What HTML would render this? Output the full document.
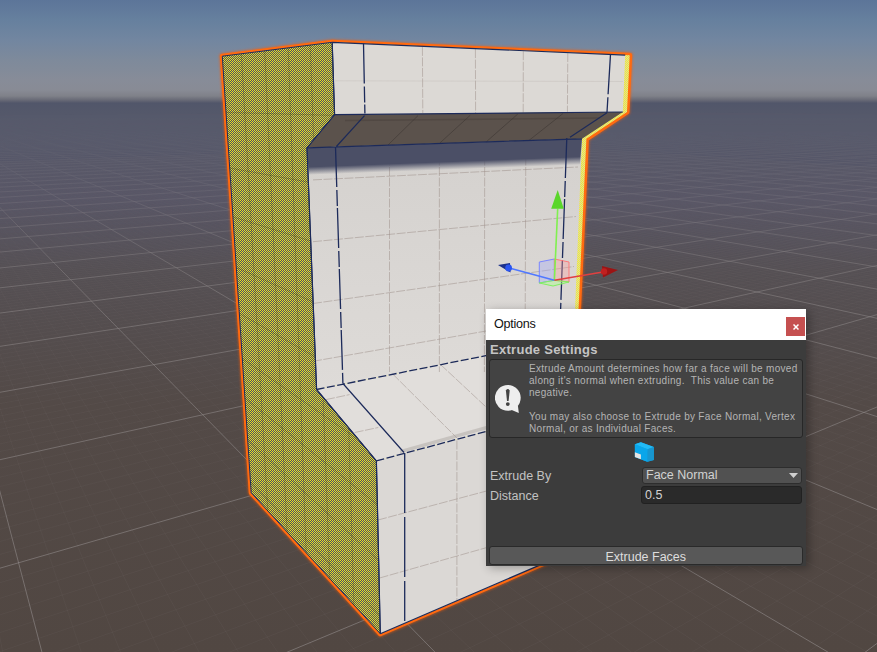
<!DOCTYPE html>
<html><head><meta charset="utf-8">
<style>
html,body{margin:0;padding:0;width:877px;height:652px;overflow:hidden;background:#514a4b;}
body{position:relative;font-family:"Liberation Sans",sans-serif;}
svg.scene{position:absolute;left:0;top:0;}
.dlg{position:absolute;left:486px;top:309px;width:320px;height:257px;background:#3c3c3c;box-shadow:3px 2px 9px rgba(0,0,0,0.3);}
.title{position:absolute;left:0;top:0;width:320px;height:31px;background:#ffffff;}
.title span{position:absolute;left:8px;top:8px;font-size:12.6px;letter-spacing:-0.25px;color:#111;}
.close{position:absolute;left:300px;top:8px;width:19px;height:19px;background:#c55050;color:#fff;font-size:12px;line-height:18px;text-align:center;font-weight:bold;}
.hdr{position:absolute;left:4px;top:33px;font-size:13px;font-weight:bold;letter-spacing:0.28px;color:#c4c4c4;}
.help{position:absolute;left:3px;top:50px;width:314px;height:79px;box-sizing:border-box;border:1px solid #272727;border-radius:3px;background:#434343;}
.help .txt{position:absolute;left:39px;top:3px;font-size:10px;line-height:12.1px;letter-spacing:0.3px;color:#b4b4b4;white-space:pre;}
.lbl{position:absolute;left:4px;font-size:12.5px;color:#c2c2c2;}
.dd{position:absolute;left:156px;top:157.5px;width:160px;height:17px;box-sizing:border-box;background:#515151;border:1px solid #2d2d2d;border-radius:3px;}
.dd span{position:absolute;left:3px;top:0px;font-size:12.5px;color:#d2d2d2;}
.fld{position:absolute;left:155px;top:177px;width:161px;height:17.5px;box-sizing:border-box;background:#2a2a2a;border:1px solid #212121;border-radius:3px;}
.fld span{position:absolute;left:3px;top:1px;font-size:12.5px;color:#d2d2d2;}
.btn{position:absolute;left:3px;top:237px;width:313.5px;height:18.5px;box-sizing:border-box;background:#585858;border:1px solid #2a2a2a;border-radius:3px;text-align:center;}
.btn span{font-size:12.5px;color:#dedede;line-height:14px;}
</style></head><body>
<svg class="scene" width="877" height="652" viewBox="0 0 877 652">
<defs>
<linearGradient id="sky" x1="0" y1="0" x2="0" y2="103" gradientUnits="userSpaceOnUse">
<stop offset="0" stop-color="#5c7599"/>
<stop offset="0.194" stop-color="#66809e"/>
<stop offset="0.388" stop-color="#7286a0"/>
<stop offset="0.583" stop-color="#7e8a9b"/>
<stop offset="0.777" stop-color="#878c98"/>
<stop offset="0.874" stop-color="#888b95"/>
<stop offset="0.932" stop-color="#7f8189"/>
<stop offset="0.971" stop-color="#686a76"/>
<stop offset="1" stop-color="#52566a"/>
</linearGradient>
<linearGradient id="gnd" x1="0" y1="99" x2="0" y2="652" gradientUnits="userSpaceOnUse">
<stop offset="0" stop-color="#52566a"/>
<stop offset="0.007" stop-color="#51566a"/>
<stop offset="0.025" stop-color="#54586a"/>
<stop offset="0.06" stop-color="#55586a"/>
<stop offset="0.18" stop-color="#575566"/>
<stop offset="0.31" stop-color="#555054"/>
<stop offset="0.55" stop-color="#534a47"/>
<stop offset="1" stop-color="#514742"/>
</linearGradient>
<linearGradient id="gfade" x1="0" y1="98" x2="0" y2="652" gradientUnits="userSpaceOnUse">
<stop offset="0" stop-color="#fff" stop-opacity="0"/>
<stop offset="0.06" stop-color="#fff" stop-opacity="0.05"/>
<stop offset="0.2" stop-color="#fff" stop-opacity="0.42"/>
<stop offset="0.35" stop-color="#fff" stop-opacity="0.8"/>
<stop offset="0.55" stop-color="#fff" stop-opacity="0.9"/>
<stop offset="1" stop-color="#fff" stop-opacity="1"/>
</linearGradient>
<mask id="gmask" maskUnits="userSpaceOnUse" x="0" y="0" width="877" height="652"><rect x="0" y="98" width="877" height="554" fill="url(#gfade)"/></mask>
<clipPath id="gclip"><rect x="0" y="100" width="877" height="552"/></clipPath>
<pattern id="chk" width="2" height="2" patternUnits="userSpaceOnUse">
<rect width="2" height="2" fill="#4c4e6a"/><rect width="1" height="1" fill="#ebe31c"/><rect x="1" y="1" width="1" height="1" fill="#ebe31c"/>
</pattern>
<pattern id="chk2" width="2" height="2" patternUnits="userSpaceOnUse">
<rect width="2" height="2" fill="#dcd9a0"/><rect width="1" height="1" fill="#f4ee30"/><rect x="1" y="1" width="1" height="1" fill="#f4ee30"/>
</pattern>
<linearGradient id="wallg" x1="0" y1="140" x2="0" y2="390" gradientUnits="userSpaceOnUse">
<stop offset="0" stop-color="#d4d1ce"/>
<stop offset="1" stop-color="#dedbd8"/>
</linearGradient>
<linearGradient id="shad" x1="440" y1="162" x2="440.3" y2="170" gradientUnits="userSpaceOnUse">
<stop offset="0" stop-color="#4b4f66" stop-opacity="1"/>
<stop offset="1" stop-color="#4b4f66" stop-opacity="0"/>
</linearGradient>
<filter id="glow" x="-10%" y="-10%" width="120%" height="120%"><feGaussianBlur stdDeviation="0.9"/></filter>
</defs>
<rect x="0" y="0" width="877" height="103" fill="url(#sky)"/>
<rect x="0" y="103" width="877" height="549" fill="url(#gnd)"/>
<g clip-path="url(#gclip)" mask="url(#gmask)">
<path d="M-5.0 162.2L508.0 143.6M-5.0 162.4L509.5 143.7M-5.0 162.6L511.0 143.8M-5.0 162.9L512.5 143.9M-5.0 163.1L514.0 144.0M-5.0 163.3L515.6 144.1M-5.0 163.5L517.1 144.2M-5.0 163.8L518.6 144.3M-5.0 164.0L520.2 144.4M-5.0 164.5L523.3 144.6M-5.0 164.7L524.9 144.7M-5.0 165.0L526.5 144.8M-5.0 165.2L528.1 144.9M-5.0 165.5L529.7 145.0M-5.0 165.7L531.3 145.1M-5.0 166.0L532.9 145.2M-5.0 166.2L534.5 145.3M-5.0 166.5L536.2 145.4M-5.0 167.0L539.5 145.6M-5.0 167.3L541.1 145.8M-5.0 167.5L542.8 145.9M-5.0 167.8L544.5 146.0M-5.0 168.1L546.2 146.1M-5.0 168.3L547.9 146.2M-5.0 168.6L549.6 146.3M-5.0 168.9L551.3 146.4M-5.0 169.2L553.0 146.5M-5.0 169.7L556.5 146.8M-5.0 170.0L558.2 146.9M-5.0 170.3L560.0 147.0M-5.0 170.6L561.7 147.1M-5.0 170.9L563.5 147.2M-5.0 171.2L565.3 147.3M-5.0 171.5L567.1 147.5M-5.0 171.8L568.9 147.6M-5.0 172.1L570.7 147.7M-5.0 172.7L574.4 147.9M-5.0 173.0L576.2 148.0M-5.0 173.3L578.1 148.2M-5.0 173.7L580.0 148.3M-5.0 174.0L581.8 148.4M-5.0 174.3L583.7 148.5M-5.0 174.6L585.6 148.7M-5.0 175.0L587.5 148.8M-5.0 175.3L589.4 148.9M-5.0 176.0L593.3 149.2M-5.0 176.3L595.3 149.3M-5.0 176.6L597.2 149.4M-5.0 177.0L599.2 149.5M-5.0 177.4L601.2 149.7M-5.0 177.7L603.2 149.8M-5.0 178.1L605.2 149.9M-5.0 178.4L607.2 150.1M-5.0 178.8L609.2 150.2M-5.0 179.5L613.3 150.5M-5.0 179.9L615.4 150.6M-5.0 180.3L617.5 150.7M-5.0 180.7L619.6 150.9M-5.0 181.1L621.7 151.0M-5.0 181.5L623.8 151.2M-5.0 181.9L625.9 151.3M-5.0 182.3L628.1 151.4M-5.0 182.7L630.2 151.6M-5.0 183.5L634.5 151.9M-5.0 183.9L636.7 152.0M-5.0 184.3L638.9 152.1M-5.0 184.8L641.2 152.3M-5.0 185.2L643.4 152.4M-5.0 185.6L645.6 152.6M-5.0 186.1L647.9 152.7M-5.0 186.5L650.2 152.9M-5.0 187.0L652.4 153.0M-5.0 187.9L657.1 153.3M-5.0 188.3L659.4 153.5M-5.0 188.8L661.7 153.6M-5.0 189.3L664.1 153.8M-5.0 189.8L666.4 153.9M-5.0 190.2L668.8 154.1M-5.0 190.7L671.2 154.2M-5.0 191.2L673.6 154.4M-5.0 191.7L676.1 154.6M-5.0 192.8L681.0 154.9M-5.0 193.3L683.4 155.0M-5.0 193.8L685.9 155.2M-5.0 194.3L688.4 155.4M-5.0 194.9L691.0 155.5M-5.0 195.4L693.5 155.7M-5.0 196.0L696.1 155.9M-5.0 196.5L698.6 156.0M-5.0 197.1L701.2 156.2M-5.0 198.3L706.5 156.6M-5.0 198.9L709.1 156.7M-5.0 199.4L711.8 156.9M-5.0 200.0L714.4 157.1M-5.0 200.7L717.1 157.2M-5.0 201.3L719.8 157.4M-5.0 201.9L722.6 157.6M-5.0 202.5L725.3 157.8M-5.0 203.2L728.1 158.0M-5.0 204.5L733.7 158.3M-5.0 205.2L736.5 158.5M-5.0 205.8L739.3 158.7M-5.0 206.5L742.2 158.9M-5.0 207.2L745.0 159.1M-5.0 207.9L747.9 159.3M-5.0 208.6L750.9 159.5M-5.0 209.4L753.8 159.6M-5.0 210.1L756.8 159.8M-5.0 211.6L762.7 160.2M-5.0 212.4L765.8 160.4M-5.0 213.1L768.8 160.6M-5.0 213.9L771.9 160.8M-5.0 214.7L775.0 161.0M-5.0 215.5L778.1 161.2M-5.0 216.3L781.2 161.4M-5.0 217.2L784.3 161.6M-5.0 218.0L787.5 161.8M-5.0 219.8L793.9 162.3M-5.0 220.7L797.2 162.5M-5.0 221.6L800.4 162.7M-5.0 222.5L803.7 162.9M-5.0 223.4L807.0 163.1M-5.0 224.3L810.4 163.3M-5.0 225.3L813.8 163.6M-5.0 226.3L817.1 163.8M-5.0 227.3L820.6 164.0M-5.0 229.3L827.5 164.5M-5.0 230.3L831.0 164.7M-5.0 231.4L834.5 164.9M-5.0 232.5L838.0 165.1M-5.0 233.5L841.6 165.4M-5.0 234.7L845.2 165.6M-5.0 235.8L848.8 165.8M-5.0 236.9L852.5 166.1M-5.0 238.1L856.1 166.3M-5.0 240.5L863.6 166.8M-5.0 241.7L867.4 167.1M-5.0 243.0L871.2 167.3M-5.0 244.3L875.0 167.6M-5.0 245.6L878.8 167.8M-5.0 246.9L882.0 168.1M-5.0 248.3L882.0 168.7M-5.0 249.6L882.0 169.4M-5.0 251.0L882.0 170.0M-5.0 253.9L882.0 171.3M-5.0 255.4L882.0 172.0M-5.0 256.9L882.0 172.6M-5.0 258.5L882.0 173.3M-5.0 260.1L882.0 174.0M-5.0 261.7L882.0 174.8M-5.0 263.3L882.0 175.5M-5.0 265.0L882.0 176.3M-5.0 266.7L882.0 177.0M-5.0 270.3L882.0 178.6M-5.0 272.1L882.0 179.5M-5.0 274.0L882.0 180.3M-5.0 275.9L882.0 181.2M-5.0 277.9L882.0 182.0M-5.0 279.9L882.0 183.0M-5.0 281.9L882.0 183.9M-5.0 284.0L882.0 184.8M-5.0 286.2L882.0 185.8M-5.0 290.6L882.0 187.8M-5.0 292.9L882.0 188.8M-5.0 295.3L882.0 189.9M-5.0 297.7L882.0 191.0M-5.0 300.2L882.0 192.1M-5.0 302.8L882.0 193.3M-5.0 305.4L882.0 194.4M-5.0 308.1L882.0 195.6M-5.0 611.8L4.2 660.0M-5.0 310.9L882.0 196.9M-5.0 393.4L83.9 660.0M-5.0 316.7L882.0 199.5M-5.0 342.2L123.8 660.0M-5.0 319.7L882.0 200.8M-5.0 306.3L163.6 660.0M-5.0 322.7L882.0 202.2M-5.0 279.9L203.5 660.0M-5.0 325.9L882.0 203.7M-5.0 259.5L243.4 660.0M-5.0 329.2L882.0 205.1M-5.0 243.4L283.2 660.0M-5.0 332.6L882.0 206.6M-5.0 230.3L323.1 660.0M-5.0 336.1L882.0 208.2M-5.0 219.4L363.0 660.0M-5.0 339.6L882.0 209.8M-5.0 210.3L402.8 660.0M-5.0 343.3L882.0 211.5M-5.0 195.7L482.5 660.0M-5.0 351.1L882.0 215.0M-5.0 189.9L522.4 660.0M-5.0 355.1L882.0 216.8M-5.0 184.7L562.3 660.0M-5.0 359.4L882.0 218.7M-5.0 180.1L602.1 660.0M-5.0 363.7L882.0 220.6M-5.0 176.0L642.0 660.0M-5.0 368.2L882.0 222.7M-5.0 172.4L681.9 660.0M-5.0 372.8L882.0 224.7M-5.0 169.0L721.7 660.0M-5.0 377.7L882.0 226.9M-5.0 166.0L761.6 660.0M-5.0 382.7L882.0 229.2M-5.0 163.3L801.5 660.0M-5.0 387.8L882.0 231.5M0.8 161.7L881.2 660.0M-5.0 398.8L882.0 236.4M4.7 161.6L882.0 638.8M-5.0 404.6L882.0 239.0M8.6 161.5L882.0 618.7M-5.0 410.6L882.0 241.7M12.5 161.3L882.0 600.1M-5.0 416.9L882.0 244.6M16.3 161.2L882.0 582.7M-5.0 423.5L882.0 247.5M20.1 161.0L882.0 566.6M-5.0 430.3L882.0 250.6M23.9 160.9L882.0 551.5M-5.0 437.4L882.0 253.8M27.7 160.8L882.0 537.3M-5.0 444.9L882.0 257.1M31.5 160.6L882.0 524.1M-5.0 452.7L882.0 260.6M39.0 160.4L882.0 499.8M-5.0 469.3L882.0 268.1M42.7 160.2L882.0 488.7M-5.0 478.3L882.0 272.2M46.4 160.1L882.0 478.2M-5.0 487.7L882.0 276.4M50.0 160.0L882.0 468.3M-5.0 497.6L882.0 280.8M53.7 159.8L882.0 458.8M-5.0 508.0L882.0 285.5M57.3 159.7L882.0 449.9M-5.0 519.0L882.0 290.4M61.0 159.6L882.0 441.4M-5.0 530.6L882.0 295.7M64.6 159.4L882.0 433.3M-5.0 542.8L882.0 301.2M68.2 159.3L882.0 425.5M-5.0 555.8L882.0 307.0M75.3 159.1L882.0 411.1M-5.0 584.2L882.0 319.8M78.9 158.9L882.0 404.4M-5.0 599.8L882.0 326.8M82.4 158.8L882.0 397.9M-5.0 616.4L882.0 334.2M85.9 158.7L882.0 391.8M-5.0 634.2L882.0 342.2M89.4 158.5L882.0 385.9M-5.0 653.3L882.0 350.8M92.9 158.4L882.0 380.2M33.8 660.0L882.0 360.0M96.3 158.3L882.0 374.7M92.5 660.0L882.0 369.9M99.8 158.2L882.0 369.5M151.1 660.0L882.0 380.7M103.2 158.0L882.0 364.4M209.7 660.0L882.0 392.3M110.0 157.8L882.0 354.9M327.0 660.0L882.0 418.7M113.4 157.7L882.0 350.4M385.6 660.0L882.0 433.8M116.8 157.6L882.0 346.0M444.2 660.0L882.0 450.5M120.1 157.4L882.0 341.8M502.8 660.0L882.0 468.9M123.5 157.3L882.0 337.8M561.5 660.0L882.0 489.4M126.8 157.2L882.0 333.8M620.1 660.0L882.0 512.3M130.1 157.1L882.0 330.0M678.7 660.0L882.0 538.1M133.4 157.0L882.0 326.4M737.3 660.0L882.0 567.4M136.7 156.8L882.0 322.8M796.0 660.0L882.0 601.0M143.2 156.6L882.0 316.0M146.4 156.5L882.0 312.8M149.6 156.4L882.0 309.7M152.9 156.3L882.0 306.6M156.0 156.1L882.0 303.7M159.2 156.0L882.0 300.8M162.4 155.9L882.0 298.0M165.5 155.8L882.0 295.3M168.7 155.7L882.0 292.7M174.9 155.5L882.0 287.6M178.0 155.3L882.0 285.2M181.1 155.2L882.0 282.8M184.2 155.1L882.0 280.5M187.2 155.0L882.0 278.3M190.3 154.9L882.0 276.1M193.3 154.8L882.0 273.9M196.3 154.7L882.0 271.9M199.3 154.6L882.0 269.8M205.3 154.4L882.0 265.9M208.3 154.3L882.0 264.0M211.2 154.1L882.0 262.2M214.2 154.0L882.0 260.3M217.1 153.9L882.0 258.6M220.0 153.8L882.0 256.9M222.9 153.7L882.0 255.2M225.8 153.6L882.0 253.5M228.7 153.5L882.0 251.9M234.4 153.3L882.0 248.8M237.3 153.2L882.0 247.3M240.1 153.1L882.0 245.8M242.9 153.0L882.0 244.3M245.7 152.9L882.0 242.9M248.5 152.8L882.0 241.5M251.3 152.7L882.0 240.1M254.1 152.6L882.0 238.8M256.9 152.5L882.0 237.5M262.4 152.3L882.0 234.9M265.1 152.2L882.0 233.7M267.8 152.1L882.0 232.5M270.5 152.0L882.0 231.3M273.2 151.9L882.0 230.1M275.9 151.8L882.0 228.9M278.6 151.7L882.0 227.8M281.2 151.6L882.0 226.7M283.9 151.5L882.0 225.6M289.2 151.3L882.0 223.5M291.8 151.2L882.0 222.4M294.4 151.1L882.0 221.4M297.0 151.1L882.0 220.4M299.6 151.0L882.0 219.4M302.2 150.9L882.0 218.5M304.8 150.8L882.0 217.5M307.3 150.7L882.0 216.6M309.9 150.6L882.0 215.7M315.0 150.4L882.0 213.9M317.5 150.3L882.0 213.0M320.0 150.2L882.0 212.1M322.5 150.1L882.0 211.3M325.0 150.0L882.0 210.5M327.5 150.0L882.0 209.6M329.9 149.9L882.0 208.8M332.4 149.8L882.0 208.0M334.9 149.7L882.0 207.2M339.7 149.5L882.0 205.7M342.2 149.4L882.0 204.9M344.6 149.3L882.0 204.2M347.0 149.2L882.0 203.5M349.4 149.2L882.0 202.8M351.8 149.1L882.0 202.1M354.2 149.0L882.0 201.4M356.5 148.9L882.0 200.7M358.9 148.8L882.0 200.0M363.6 148.6L882.0 198.7M365.9 148.6L882.0 198.0M368.2 148.5L882.0 197.4M370.6 148.4L882.0 196.7M372.9 148.3L882.0 196.1M375.2 148.2L882.0 195.5M377.5 148.1L882.0 194.9M379.8 148.1L882.0 194.3M382.0 148.0L882.0 193.7M386.6 147.8L882.0 192.5M388.8 147.7L882.0 191.9M391.0 147.7L882.0 191.4M393.3 147.6L882.0 190.8M395.5 147.5L882.0 190.3M397.7 147.4L882.0 189.7M399.9 147.3L882.0 189.2M402.1 147.3L882.0 188.7M404.3 147.2L882.0 188.2M408.7 147.0L882.0 187.1M410.9 146.9L882.0 186.6M413.0 146.9L882.0 186.1M415.2 146.8L882.0 185.6M417.3 146.7L882.0 185.2M419.5 146.6L882.0 184.7M421.6 146.6L882.0 184.2M423.7 146.5L882.0 183.7M425.8 146.4L882.0 183.3M430.0 146.3L882.0 182.4M432.1 146.2L882.0 181.9M434.2 146.1L882.0 181.5M436.3 146.0L882.0 181.0M438.4 146.0L882.0 180.6M440.4 145.9L882.0 180.2M442.5 145.8L882.0 179.7M444.5 145.7L882.0 179.3M446.6 145.7L882.0 178.9M450.6 145.5L882.0 178.1M452.6 145.4L882.0 177.7M454.7 145.4L882.0 177.3M456.7 145.3L882.0 176.9M458.7 145.2L882.0 176.5M460.7 145.1L882.0 176.1M462.6 145.1L882.0 175.8M464.6 145.0L882.0 175.4M466.6 144.9L882.0 175.0M470.5 144.8L882.0 174.3M472.5 144.7L882.0 173.9M474.4 144.6L882.0 173.6M476.4 144.6L882.0 173.2M478.3 144.5L882.0 172.9M480.2 144.4L882.0 172.5M482.1 144.4L882.0 172.2M484.0 144.3L882.0 171.8M485.9 144.2L882.0 171.5M489.7 144.1L882.0 170.8M491.6 144.0L882.0 170.5M493.5 144.0L882.0 170.2M495.4 143.9L882.0 169.9M497.2 143.8L882.0 169.6M499.1 143.8L882.0 169.2M501.0 143.7L882.0 168.9M502.8 143.6L882.0 168.6M504.6 143.6L882.0 168.3" stroke="#7a7272" stroke-opacity="0.12" stroke-width="1" fill="none"/>
<path d="M-5.0 115.9L573.5 111.5M-5.0 116.0L576.7 111.6M-5.0 116.1L580.0 111.6M-5.0 116.2L583.3 111.7M-5.0 116.3L586.7 111.7M-5.0 116.4L590.1 111.7M-5.0 116.5L593.5 111.8M-5.0 116.6L596.9 111.8M-5.0 116.7L600.4 111.9M-5.0 116.8L603.9 111.9M-5.0 116.9L607.5 111.9M-5.0 117.0L611.0 112.0M-5.0 117.2L614.7 112.0M-5.0 117.3L618.3 112.1M-5.0 117.4L622.0 112.1M-5.0 117.5L625.7 112.1M-5.0 117.6L629.5 112.2M-5.0 117.8L633.3 112.2M-5.0 117.9L637.2 112.3M-5.0 118.0L641.1 112.3M-5.0 118.2L645.0 112.4M-5.0 118.3L649.0 112.4M-5.0 118.4L653.0 112.5M-5.0 118.6L657.1 112.5M-5.0 118.7L661.2 112.6M-5.0 118.9L665.3 112.6M-5.0 119.0L669.5 112.6M-5.0 119.2L673.8 112.7M-5.0 119.3L678.0 112.7M-5.0 119.5L682.4 112.8M-5.0 119.7L686.8 112.8M-5.0 119.8L691.2 112.9M-5.0 120.0L695.7 112.9M-5.0 120.2L700.2 113.0M-5.0 120.3L704.8 113.1M-5.0 120.5L709.4 113.1M-5.0 120.7L714.1 113.2M-5.0 120.9L718.9 113.2M-5.0 121.1L723.7 113.3M-5.0 121.3L728.5 113.3M-5.0 121.5L733.5 113.4M-5.0 121.7L738.4 113.4M-5.0 121.9L743.5 113.5M-5.0 122.1L748.6 113.6M-5.0 122.4L753.7 113.6M-5.0 122.6L759.0 113.7M-5.0 122.8L764.2 113.7M-5.0 123.1L769.6 113.8M-5.0 123.3L775.0 113.9M-5.0 123.6L780.5 113.9M-5.0 123.8L786.0 114.0M-5.0 124.1L791.7 114.1M-5.0 124.4L797.4 114.1M-5.0 124.6L803.1 114.2M-5.0 124.9L809.0 114.2M-5.0 125.2L814.9 114.3M-5.0 125.5L820.9 114.4M-5.0 125.8L827.0 114.5M-5.0 126.2L833.1 114.5M-5.0 126.5L839.4 114.6M-5.0 126.8L845.7 114.7M-5.0 127.2L852.1 114.7M-5.0 127.6L858.6 114.8M-5.0 127.9L865.2 114.9M-5.0 128.3L871.9 115.0M-5.0 128.7L878.6 115.1M-5.0 129.1L882.0 115.2M-5.0 129.6L882.0 115.4M-5.0 130.0L882.0 115.6M-5.0 130.5L882.0 115.8M-5.0 130.9L882.0 116.0M-5.0 131.4L882.0 116.2M-5.0 131.9L882.0 116.4M-5.0 132.5L882.0 116.7M-5.0 133.0L882.0 116.9M-5.0 133.6L882.0 117.2M-5.0 134.2L882.0 117.5M-5.0 134.8L882.0 117.7M-5.0 135.4L882.0 118.0M-5.0 136.1L882.0 118.3M-5.0 136.8L882.0 118.6M-5.0 137.5L882.0 119.0M-5.0 138.3L882.0 119.3M-5.0 139.1L882.0 119.7M-5.0 139.9L882.0 120.0M-5.0 140.8L882.0 120.4M-5.0 141.7L882.0 120.8M-5.0 142.7L882.0 121.3M-5.0 143.7L882.0 121.7M-5.0 144.8L882.0 122.2M-5.0 145.9L882.0 122.7M-5.0 147.1L882.0 123.3M-5.0 148.4L882.0 123.8M-5.0 149.7L882.0 124.4M-5.0 151.1L882.0 125.1M-5.0 152.7L882.0 125.8M-5.0 154.3L882.0 126.5M-5.0 156.0L882.0 127.3M-5.0 157.8L882.0 128.1M-5.0 159.8L882.0 129.0M-5.0 162.0L882.0 129.9M-5.0 164.3L882.0 131.0M-5.0 166.7L882.0 132.1M-5.0 169.5L882.0 133.3M-5.0 172.4L882.0 134.6M-5.0 175.6L882.0 136.1M-5.0 179.2L882.0 137.7M-5.0 183.1L882.0 139.4M-5.0 187.4L882.0 141.4M-5.0 192.2L882.0 143.6M-5.0 197.7L882.0 146.0M-5.0 203.8L882.0 148.8M-5.0 210.8L882.0 151.9M-5.0 218.9L882.0 155.5M-5.0 228.3L882.0 159.7M-5.0 239.3L882.0 164.7M-5.0 252.5L882.0 170.6M-5.0 268.5L882.0 177.8M-5.0 288.4L882.0 186.8M-5.0 472.7L44.0 660.0M-5.0 313.7L882.0 198.2M-5.0 202.5L442.7 660.0M-5.0 347.1L882.0 213.2M-5.0 160.8L841.3 660.0M-5.0 393.2L882.0 233.9M-5.0 143.8L882.0 511.6M-5.0 460.8L882.0 264.3M-5.0 134.7L882.0 418.2M-5.0 569.6L882.0 313.2M-5.0 128.9L882.0 359.6M268.3 660.0L882.0 404.9M-5.0 125.0L882.0 319.4M854.6 660.0L882.0 639.7M-5.0 122.1L882.0 290.1M-5.0 119.9L882.0 267.8M-5.0 118.2L882.0 250.3M-5.0 116.8L882.0 236.2M-3.1 115.9L882.0 224.5M5.0 115.8L882.0 214.8M13.1 115.8L882.0 206.5M21.1 115.7L882.0 199.3M28.9 115.6L882.0 193.1M36.7 115.6L882.0 187.6M44.5 115.5L882.0 182.8M52.1 115.5L882.0 178.5M59.7 115.4L882.0 174.6M67.2 115.3L882.0 171.2M74.7 115.3L882.0 168.0M82.0 115.2L882.0 165.1M89.3 115.2L882.0 162.5M96.5 115.1L882.0 160.1M103.7 115.1L882.0 157.9M110.8 115.0L882.0 155.8M117.8 115.0L882.0 153.9M124.7 114.9L882.0 152.2M131.6 114.9L882.0 150.5M138.5 114.8L882.0 149.0M145.2 114.8L882.0 147.5M151.9 114.7L882.0 146.2M158.6 114.7L882.0 144.9M165.1 114.6L882.0 143.7M171.7 114.6L882.0 142.6M178.1 114.5L882.0 141.5M184.5 114.5L882.0 140.5M190.9 114.4L882.0 139.6M197.2 114.4L882.0 138.6M203.4 114.3L882.0 137.8M209.6 114.3L882.0 137.0M215.7 114.2L882.0 136.2M221.8 114.2L882.0 135.4M227.8 114.1L882.0 134.7M233.8 114.1L882.0 134.0M239.7 114.1L882.0 133.4M245.5 114.0L882.0 132.8M251.3 114.0L882.0 132.2M257.1 113.9L882.0 131.6M262.8 113.9L882.0 131.0M268.5 113.8L882.0 130.5M274.1 113.8L882.0 130.0M279.7 113.7L882.0 129.5M285.2 113.7L882.0 129.0M290.7 113.7L882.0 128.6M296.1 113.6L882.0 128.1M301.5 113.6L882.0 127.7M306.9 113.5L882.0 127.3M312.2 113.5L882.0 126.9M317.4 113.5L882.0 126.5M322.6 113.4L882.0 126.1M327.8 113.4L882.0 125.8M333.0 113.3L882.0 125.4M338.0 113.3L882.0 125.1M343.1 113.3L882.0 124.8M348.1 113.2L882.0 124.5M353.1 113.2L882.0 124.2M358.0 113.2L882.0 123.9M362.9 113.1L882.0 123.6M367.8 113.1L882.0 123.3M372.6 113.1L882.0 123.0M377.4 113.0L882.0 122.7M382.1 113.0L882.0 122.5M386.8 112.9L882.0 122.2M391.5 112.9L882.0 122.0M396.1 112.9L882.0 121.8M400.7 112.8L882.0 121.5M405.3 112.8L882.0 121.3M409.8 112.8L882.0 121.1M414.3 112.7L882.0 120.9M418.8 112.7L882.0 120.6M423.2 112.7L882.0 120.4M427.6 112.6L882.0 120.2M432.0 112.6L882.0 120.0M436.3 112.6L882.0 119.9M440.6 112.5L882.0 119.7M444.9 112.5L882.0 119.5M449.1 112.5L882.0 119.3M453.3 112.4L882.0 119.1M457.5 112.4L882.0 119.0M461.7 112.4L882.0 118.8M465.8 112.4L882.0 118.6M469.9 112.3L882.0 118.5M473.9 112.3L882.0 118.3M477.9 112.3L882.0 118.2M481.9 112.2L882.0 118.0M485.9 112.2L882.0 117.9M489.9 112.2L882.0 117.7M493.8 112.1L882.0 117.6M497.7 112.1L882.0 117.5M501.5 112.1L882.0 117.3M505.4 112.1L882.0 117.2M509.2 112.0L882.0 117.1M513.0 112.0L882.0 116.9M516.7 112.0L882.0 116.8M520.5 111.9L882.0 116.7M524.2 111.9L882.0 116.6M527.8 111.9L882.0 116.4M531.5 111.9L882.0 116.3M535.1 111.8L882.0 116.2M538.7 111.8L882.0 116.1M542.3 111.8L882.0 116.0M545.9 111.8L882.0 115.9M549.4 111.7L882.0 115.8M552.9 111.7L882.0 115.7M556.4 111.7L882.0 115.6M559.9 111.6L882.0 115.5M563.3 111.6L882.0 115.4M566.7 111.6L882.0 115.3M570.1 111.6L882.0 115.2M573.5 111.5L882.0 115.1" stroke="#999393" stroke-opacity="0.55" stroke-width="1" fill="none"/>
</g>
<g id="obj">
<polygon points="222.3,56.2 332.2,42.3 629.7,55.3 627.0,112.0 586.4,138.8 578.5,310.0 574.5,338.0 640.0,330.0 640.0,522.0 380.3,633.7 251.2,492.7" fill="#ff6a10" stroke="#ff5a00" stroke-width="6.5" stroke-linejoin="round" stroke-opacity="0.5" filter="url(#glow)"/>
<polygon points="222.3,56.2 332.2,42.3 629.7,55.3 627.0,112.0 586.4,138.8 578.5,310.0 574.5,338.0 640.0,330.0 640.0,522.0 380.3,633.7 251.2,492.7" fill="#ff6a10" stroke="#ff6a10" stroke-width="5" stroke-linejoin="round"/>
<polygon points="332.2,42.3 629.7,55.3 627.0,112.0 586.4,138.8 578.5,310.0 574.5,338.0 640.0,330.0 640.0,522.0 380.3,633.7 251.2,492.7 222.3,56.2" fill="url(#chk2)"/>
<polygon points="332.2,42.3 625.2,55.1 622.8,112.0 334.6,114.7" fill="#dcd9d5"/>
<polygon points="334.6,114.7 622.8,112.0 582.0,138.8 307.0,147.8" fill="#5b524c"/>
<polygon points="307.0,147.8 582.0,138.8 575.0,310.0 570.0,338.8 316.6,389.5" fill="url(#wallg)"/>
<polygon points="316.6,389.5 570.0,338.8 640.0,370.0 640.0,390.0 376.4,460.9" fill="#e1dedb"/>
<polygon points="376.4,460.9 640.0,390.0 640.0,522.0 380.3,633.7" fill="#dbd8d5"/>
<path d="M422.4 46.9L422.8 113.0M475.4 49.1L475.6 113.0M523.3 51.2L523.2 113.0M567.8 53.1L567.4 113.0M389.5 146.0L389.5 372.0M439.4 146.0L439.4 372.0M484.7 146.0L484.4 372.0M525.8 146.0L525.0 372.0M313.0 179.9L578.0 167.0M313.0 241.7L576.0 216.5M313.0 303.5L574.0 266.5M313.0 361.3L572.0 316.0M456.9 440.5L456.9 602.0M326.0 399.6L349.6 394.6M354.7 432.5L378.3 427.5M392.7 374.0L457.0 438.0M440.4 364.4L500.0 420.0M378.0 520.0L640.0 450.0M379.6 578.0L640.0 504.0" stroke="#9c8e88" stroke-width="1" stroke-opacity="0.5" stroke-dasharray="9 1.5" fill="none"/>
<path d="M335 80.8L623 81.5" stroke="#b0a8a4" stroke-width="1" stroke-opacity="0.25" fill="none"/>
<polygon points="307.0,147.8 582.0,138.8 578.0,190.0 310.0,190.0" fill="url(#shad)"/>
<polygon points="400,450 486,426 486,429.5 400,453.5" fill="#a8a29e" opacity="0.45"/>
<path d="M345 120.5L600 118" stroke="#3e3734" stroke-width="1.5" stroke-opacity="0.35" fill="none"/>
<path d="M470.2 115.3L440.0 142.9M517.8 114.0L486.5 141.6M563.0 113.5L529.0 140.4M418.0 115.6L388.0 145.0" stroke="#3e3734" stroke-width="1" stroke-opacity="0.6" fill="none"/>
<polygon points="222.3,56.2 332.2,42.3 334.6,114.7 307.0,147.8 316.6,389.5 376.4,460.9 380.3,633.7 251.2,492.7" fill="url(#chk)" stroke="#1c2a5a" stroke-width="1"/>
<clipPath id="ycl"><polygon points="222.3,56.2 332.2,42.3 334.6,114.7 307.0,147.8 316.6,389.5 376.4,460.9 380.3,633.7 251.2,492.7"/></clipPath>
<path clip-path="url(#ycl)" d="M223.0 112.3L400.0 117.2M226.7 167.5L400.0 198.5M229.9 215.9L400.0 268.9M233.3 266.1L400.0 341.0M236.3 311.6L400.0 405.6M239.3 356.5L400.0 468.7M241.9 395.6L400.0 522.9M244.7 437.2L400.0 580.1M247.5 478.9L400.0 636.6M240.7 42.7L268.3 520.0M264.2 39.8L287.4 540.0M287.8 36.8L306.4 560.0M309.8 34.0L330.2 590.0M337.2 30.0L354.0 610.0" stroke="#1a1a08" stroke-width="1" stroke-opacity="0.2" fill="none"/>
<path d="M332.2 42.3L625.2 55.1M334.6 114.7L622.8 112.0M307.0 147.8L582.0 138.8M380.3 633.7L640.0 522.0M332.2 42.3L334.6 114.7M334.6 114.7L307.0 147.8M307.0 147.8L316.6 389.5M316.6 389.5L376.4 460.9M376.4 460.9L380.3 633.7M364.5 115.6L336.4 146.5M342.9 383.5L404.0 452.5M607.0 112.7L570.0 137.2" stroke="#1c2a5a" stroke-width="1.2" fill="none"/>
<path d="M363.5 43.6L364.9 113.5M610.5 54.4L607.0 112.2M335.5 147.0L342.9 383.5M566.8 138.0L560.4 315.0" stroke="#1c2a5a" stroke-width="1.3" stroke-dasharray="40 3 16 2" fill="none"/>
<path d="M316.6 389.5L570 338.8M376.4 460.9L640 390" stroke="#1c2a5a" stroke-width="1.3" stroke-dasharray="8 2.5" fill="none"/>
<path d="M404.7 453L404.7 621" stroke="#1c2a5a" stroke-width="1.3" stroke-dasharray="60 4" fill="none"/>
<g id="gizmo">
<polygon points="539.3,262 554.4,259 554.4,280.3 539.3,283" fill="#a0a8ff" fill-opacity="0.35" stroke="#7a86ff" stroke-width="1"/>
<polygon points="554.4,259 569,262 569,282 554.4,280.3" fill="#ff9a9a" fill-opacity="0.35" stroke="#ff7a7a" stroke-width="1"/>
<polygon points="539.3,283 554.4,280.3 569,282 553,286" fill="#b0ff90" fill-opacity="0.45" stroke="#80f060" stroke-width="1"/>
<line x1="554.4" y1="280.3" x2="557.7" y2="208.5" stroke="#80f050" stroke-width="1.6"/>
<polygon points="557.7,190 551.2,208.7 563.8,208.7" fill="#5ad62a"/>
<line x1="554.4" y1="280.3" x2="510.2" y2="268.3" stroke="#5078ff" stroke-width="1.6"/>
<polygon points="498,265 510,263 510.5,272.5" fill="#1a2f8a"/>
<circle cx="508.6" cy="268" r="3.4" fill="#2a55f0"/>
<line x1="554.4" y1="280.3" x2="603" y2="272" stroke="#e04040" stroke-width="1.6"/>
<polygon points="618,270 602,266 603,277.5" fill="#9c1414"/>
<circle cx="604" cy="271.5" r="3.2" fill="#c02020"/>
</g>
</g>
</svg>
<div class="dlg">
<div class="title"><span>Options</span><div class="close"><svg style="position:absolute;left:6.5px;top:7px" width="6" height="6"><path d="M0.5 0.5L5.5 5.5M5.5 0.5L0.5 5.5" stroke="#fff" stroke-width="1.5"/></svg></div></div>
<div class="hdr">Extrude Settings</div>
<div class="help">
<svg style="position:absolute;left:5px;top:19px" width="30" height="36" viewBox="0 0 30 36"><circle cx="12.8" cy="18.8" r="12.9" fill="#eeeeee"/><path d="M15.5 30.5L23.8 34L22.9 26.5Z" fill="#eeeeee"/><path d="M10.9 11.4Q12.8 8.6 14.7 11.4L13.6 22L12 22Z" fill="#434343"/><circle cx="12.8" cy="25.1" r="1.9" fill="#434343"/></svg>
<div class="txt">Extrude Amount determines how far a face will be moved
along it's normal when extruding.  This value can be
negative.

You may also choose to Extrude by Face Normal, Vertex
Normal, or as Individual Faces.</div>
</div>
<svg style="position:absolute;left:148px;top:133px" width="21" height="21" viewBox="0 0 21 21"><path d="M6.9 0.2L0.9 2.2L0.9 14.9L13.3 19.8L19.8 17.9L19.8 5Z" fill="#0aa6ea"/><path d="M6.9 0.2L0.9 2.2L13.5 7.2L19.8 5Z" fill="#22baf5"/><path d="M0.9 2.2L13.5 7.2L13.3 19.8L0.9 14.9Z" fill="#0aa6ea"/><path d="M13.5 7.2L19.8 5L19.8 17.9L13.3 19.8Z" fill="#1896cf"/><path d="M0.9 10.2L6.9 12.5L6.9 17.2L0.9 14.9Z" fill="#e4e4e4"/></svg>
<div class="lbl" style="top:160px">Extrude By</div>
<div class="dd"><span>Face Normal</span><svg style="position:absolute;left:146px;top:5px" width="9" height="6"><path d="M0 0 L9 0 L4.5 5 Z" fill="#d0d0d0"/></svg></div>
<div class="lbl" style="top:180px">Distance</div>
<div class="fld"><span>0.5</span></div>
<div class="btn"><span>Extrude Faces</span></div>
</div>
</body></html>
